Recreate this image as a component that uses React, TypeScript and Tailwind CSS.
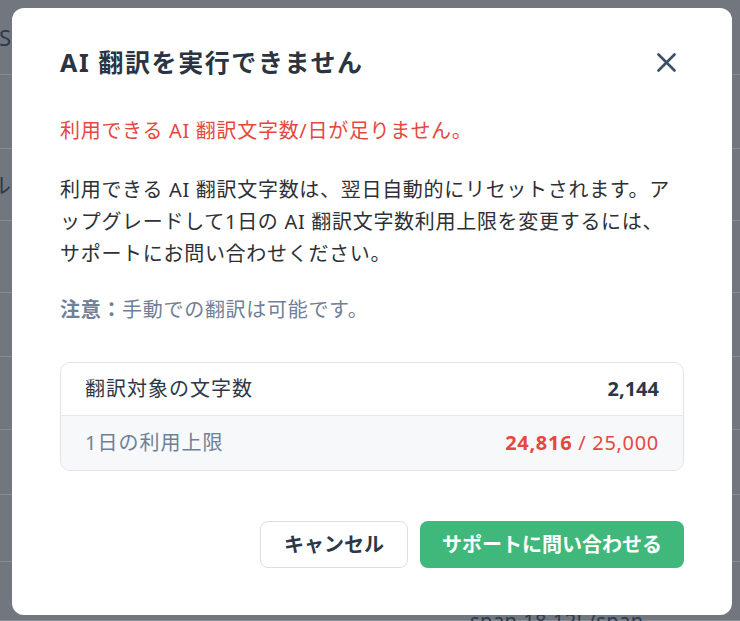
import { ReactNode } from "react";

// faint page rows behind the overlay
const rows: { h: string; left?: string }[] = [
  { h: "h-[75px]", left: "CS" },
  { h: "h-[74px]" },
  { h: "h-[72px]", left: "ル" },
  { h: "h-[72px]" },
  { h: "h-[64px]" },
  { h: "h-[73px]" },
  { h: "h-[65px]" },
  { h: "h-[67px]" },
  { h: "h-[59px]" },
];

const BackgroundPage = () => (
  <div className="flex flex-col w-full">
    {rows.map((r, i) => (
      <div
        key={i}
        className={`${r.h} flex items-center border-b border-[#888d95] shrink-0`}
      >
        <div className="w-[11px] overflow-hidden flex justify-end">
          <span className="text-[22px] text-[#2c3a4e] whitespace-nowrap">
            {r.left ?? ""}
          </span>
        </div>
      </div>
    ))}
  </div>
);

const Row = ({
  label,
  value,
  muted,
}: {
  label: string;
  value: ReactNode;
  muted?: boolean;
}) => (
  <div
    className={
      "flex items-center justify-between px-6 " +
      (muted ? "h-[54px] bg-[#f6f8fa]" : "h-[53px] border-b border-[#e2e8f0]")
    }
  >
    <span
      className={
        "tracking-[1px] " + (muted ? "text-[#718096]" : "text-[#2d3748]")
      }
    >
      {label}
    </span>
    {value}
  </div>
);

export default function App() {
  return (
    <div className="relative w-[740px] h-[621px] overflow-hidden bg-[#72777f] font-['Noto_Sans','Noto_Sans_CJK_JP',sans-serif]">
      <BackgroundPage />
      <div className="absolute left-[470px] top-[606px] text-[20px] text-[#2c3a4e] tracking-wide whitespace-nowrap">
        span 18 12! /span
      </div>

      {/* dialog */}
      <div className="absolute left-[12px] top-[8px] w-[720px] h-[607px] bg-white rounded-[12px] px-12 pt-[38px] pb-[47px] flex flex-col text-[20px] leading-[32px] text-[#2d3748] tracking-[0.7px]">
        <div className="flex items-center justify-between">
          <h2 className="text-[25px] font-bold text-[#2a3442] tracking-[1.6px]">
            AI 翻訳を実行できません
          </h2>
          <button className="w-[28px] h-[28px] flex items-center justify-center mr-[4px]">
            <svg width="19" height="19" viewBox="0 0 19 19" fill="none">
              <path
                d="M1.5 1.5L17.5 17.5M17.5 1.5L1.5 17.5"
                stroke="#3b4f66"
                strokeWidth="2.6"
                strokeLinecap="round"
              />
            </svg>
          </button>
        </div>

        <p className="mt-[37px] text-[#e5483f]">
          利用できる AI 翻訳文字数/日が足りません。
        </p>

        <p className="mt-[27px] text-[#2d3136] whitespace-nowrap">
          利用できる AI 翻訳文字数は、翌日自動的にリセットされます。ア
          <br />
          ップグレードして1日の AI 翻訳文字数利用上限を変更するには、
          <br />
          サポートにお問い合わせください。
        </p>

        <p className="mt-[24px] text-[#718096]">
          <span className="font-bold">注意：</span>手動での翻訳は可能です。
        </p>

        <div className="mt-[36px] border border-[#dfe5ec] rounded-[10px] overflow-hidden">
          <Row
            label="翻訳対象の文字数"
            value={<span className="font-bold text-[#2d3748] tracking-normal">2,144</span>}
          />
          <Row
            muted
            label="1日の利用上限"
            value={
              <span className="text-[#e5483f]">
                <span className="font-bold">24,816</span> / 25,000
              </span>
            }
          />
        </div>

        <div className="mt-auto flex justify-end gap-3 tracking-normal">
          <button className="w-[148px] h-[47px] rounded-[8px] border border-[#d8dfe7] bg-white font-bold text-[#2d3748]">
            キャンセル
          </button>
          <button className="w-[264px] h-[47px] rounded-[8px] bg-[#41b87b] font-bold text-white">
            サポートに問い合わせる
          </button>
        </div>
      </div>
    </div>
  );
}
